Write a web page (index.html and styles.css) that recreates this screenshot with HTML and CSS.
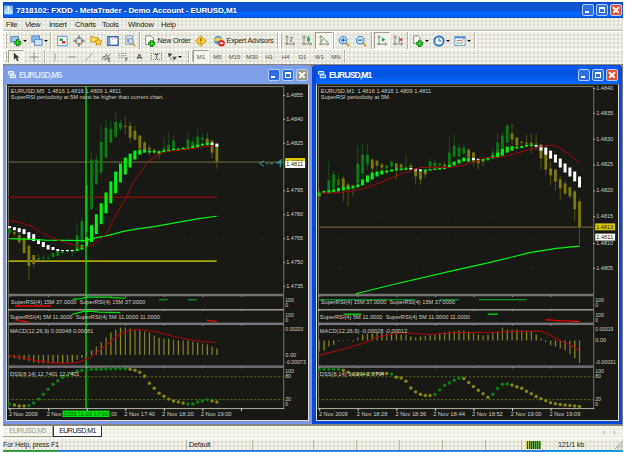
FILE: index.html
```html
<!DOCTYPE html>
<html lang="en">
<head>
<meta charset="utf-8">
<title>MetaTrader</title>
<link rel="stylesheet" href="styles.css">
</head>
<body>
<svg class="defs" aria-hidden="true">
  <defs>
    <g id="chartbars"><path d="M3.500 1v11M1 10.500h11M1.500 3l2-2 2 2M10.500 8.500l2 2-2 2" fill="none" stroke="#77776b"/></g>
    <g id="plus"><path d="M8 5v8M4 9h8" stroke="#0a6b0a" stroke-width="4"/><path d="M8 5.500v7M4.500 9h7" stroke="#2fd62f" stroke-width="2"/></g>
  </defs>
</svg>
<div class="app">
  <header class="titlebar">
    <svg class="logo" viewBox="0 0 11 11"><rect width="11" height="11" rx="1" fill="#77b9ef"/><path d="M5.500 1L1 8h9zM2 9.500h7M5.500 2v6M3.500 5.500h4" fill="none" stroke="#fff"/></svg>
    <h1>7318102: FXDD - MetaTrader - Demo Account - EURUSD,M1</h1>
    <div class="controls"><i class="min"></i><i class="max"></i><i class="close"></i></div>
  </header>
  <nav class="menu"><span>File</span><span class="m2">View</span><span class="m3">Insert</span><span class="m4">Charts</span><span class="m4">Tools</span><span class="m5">Window</span><span>Help</span></nav>

  <div class="toolbar main">
    <i class="grip"></i>
    <span class="drop w21"><svg viewBox="0 0 14 14"><rect x="1" y="2" width="9" height="6" fill="#9fc3e8" stroke="#4a78a8"/><use href="#plus" x="1"/></svg></span>
    <span class="drop w19"><svg viewBox="0 0 14 14"><rect x="1" y="1" width="9" height="7" fill="#8fb9ec" stroke="#4b7dc0"/><rect x="4" y="5" width="9" height="7" fill="#cfe2f7" stroke="#4b7dc0"/></svg></span>
    <i class="sep w5"></i>
    <span class="w17"><svg viewBox="0 0 14 14"><rect x="2" y="1.500" width="11" height="11" fill="#fff" stroke="#4a8bc8"/><path d="M4 4h4v3H4z" fill="#2aa34c"/><path d="M7 7h4v3H7z" fill="#d33a2e"/></svg></span>
    <span class="w17"><svg viewBox="0 0 14 14"><circle cx="7" cy="7" r="4" fill="none" stroke="#555"/><path d="M7 0v5M7 9v5M0 7h5M9 7h5" stroke="#555"/></svg></span>
    <span class="w17"><svg viewBox="0 0 14 14"><path d="M1 2h3l1 1h4v5H1z" fill="#ffe15a" stroke="#ba8b13"/><path d="M10 4l1.300 2.700 2.700.3-2 2 .5 3-2.500-1.500L7 12l.5-3-2-2 3-.3z" fill="#ffd232" stroke="#c28b10"/></svg></span>
    <span class="w17"><svg viewBox="0 0 14 14"><rect x="1" y="2" width="12" height="10" fill="#fff" stroke="#2459a8" stroke-width="1.500"/><path d="M3 2v10" stroke="#5f9be0" stroke-width="2"/><path d="M6 5h1M9 4h2" stroke="#d84a2c"/></svg></span>
    <span class="w17"><svg viewBox="0 0 14 14"><path d="M2 1h8v10H2z" fill="#e8f0f8" stroke="#8195ac"/><path d="M4 3v6M6 3v6" stroke="#8195ac"/><circle cx="8" cy="7" r="3" fill="#c9e1fa" stroke="#6189b5"/><path d="M10 9l3 4" stroke="#d5a12b" stroke-width="2"/></svg></span>
    <i class="sep w4"></i>
    <span class="label w50"><svg viewBox="0 0 14 14"><path d="M2 1h6l3 3v7H2z" fill="#fff" stroke="#777"/><use href="#plus" x="1" y="1"/></svg><b>New Order</b></span>
    <span class="w18"><svg viewBox="0 0 14 14"><path d="M7 .8L13.200 7 7 13.200.8 7z" fill="#ffcf2b" stroke="#b7830d"/><path d="M7 3.500v4M7 9v1.500" stroke="#855000" stroke-width="1.500"/></svg></span>
    <span class="label w66"><svg viewBox="0 0 14 14"><circle cx="6" cy="6" r="5" fill="#5b9bd8"/><path d="M1 5q5-4 10 0v2H1z" fill="#f0c74c"/><circle cx="10" cy="9.500" r="3.800" fill="#db2d22"/><path d="M8 9.500h4" stroke="#fff" stroke-width="1.500"/></svg><b>Expert Advisors</b></span>
    <i class="sep w3"></i><i class="grip g3"></i>
    <span class="w16"><svg viewBox="0 0 14 14"><use href="#chartbars"/><path d="M8.500 2v6M6.500 7h2M8.500 3h2" stroke="#4c8a50" fill="none"/></svg></span>
    <span class="w17"><svg viewBox="0 0 14 14"><use href="#chartbars"/><path d="M8.500 1v8" stroke="#247a36"/><path d="M7 3h3.500v4H7z" fill="#31b557"/></svg></span>
    <span class="w18 on"><svg viewBox="0 0 14 14"><use href="#chartbars"/><path d="M4 8q3-6 4-3t4 3" stroke="#3fa552" fill="none"/></svg></span>
    <i class="sep w2"></i>
    <span class="w17"><svg viewBox="0 0 14 14"><path d="M9 9l4 4" stroke="#d4a735" stroke-width="2.500"/><circle cx="6" cy="6" r="4.300" fill="#cfe8ff" stroke="#3d86d8" stroke-width="1.300"/><path d="M6 3.500v5M3.500 6h5" stroke="#1f5db5" stroke-width="1.400"/></svg></span>
    <span class="w17"><svg viewBox="0 0 14 14"><path d="M9 9l4 4" stroke="#d4a735" stroke-width="2.500"/><circle cx="6" cy="6" r="4.300" fill="#cfe8ff" stroke="#3d86d8" stroke-width="1.300"/><path d="M3.500 6h5" stroke="#1f5db5" stroke-width="1.400"/></svg></span>
    <i class="sep w5"></i>
    <span class="w16 on"><svg viewBox="0 0 14 14"><use href="#chartbars"/><path d="M7 3l4 2.500-4 2.500z" fill="#1f9b3d"/></svg></span>
    <span class="w16"><svg viewBox="0 0 14 14"><use href="#chartbars"/><path d="M8.500 2v7" stroke="#777"/><path d="M12 3L8.500 5.500 12 8z" fill="#cb3b2a"/></svg></span>
    <i class="sep w4"></i>
    <span class="drop w21"><svg viewBox="0 0 14 14"><path d="M2 1h5l2 2v7H2z" fill="#fff" stroke="#777"/><use href="#plus" x="1" y="1"/></svg></span>
    <span class="drop w21"><svg viewBox="0 0 14 14"><circle cx="7" cy="7" r="5.500" fill="#e8f3ff" stroke="#2767c5" stroke-width="2"/><path d="M7 3.500V7h3" stroke="#2459a8" fill="none"/></svg></span>
    <span class="drop w22"><svg viewBox="0 0 14 14"><rect x="1" y="2" width="12" height="10" fill="#fff" stroke="#4d8cd0"/><path d="M1 3h12" stroke="#4d8cd0" stroke-width="2"/><path d="M3 7l3-1 2 1 3-2" stroke="#c43b2b" fill="none"/><path d="M3 10l3-1 2 1 3-2" stroke="#3a9a4a" fill="none"/></svg></span>
    <i class="sep w2"></i>
  </div>

  <div class="toolbar tools">
    <i class="grip"></i>
    <span class="w16 on"><svg viewBox="0 0 14 14"><path d="M4 1v10l2.500-2.500L8.500 13l2-1-2-4H12z" fill="#333"/></svg></span>
    <span class="w19"><svg viewBox="0 0 14 14"><path d="M7 1v12M1 7h12" stroke="#777"/></svg></span>
    <i class="sep w3"></i>
    <span class="w17"><svg viewBox="0 0 14 14"><path d="M7 2v10" stroke="#888"/></svg></span>
    <span class="w17"><svg viewBox="0 0 14 14"><path d="M2 7h10" stroke="#888" stroke-width="1.300"/></svg></span>
    <span class="w17"><svg viewBox="0 0 14 14"><path d="M2 12L12 2" stroke="#888"/></svg></span>
    <span class="w17"><svg viewBox="0 0 14 14"><path d="M1 11L9 2M5 12l8-9M2 7l8-2M4 10l8-2M10 9v4M10 9.500h3M10 11h2.500M10 13h3" stroke="#555" fill="none"/></svg></span>
    <span class="w17"><svg viewBox="0 0 14 14"><path d="M1 2h12M1 5h12M1 8h8" stroke="#777" stroke-dasharray="2 1"/><path d="M11 8v5M11 8.500h3M11 10.500h2" stroke="#555"/></svg></span>
    <span class="w17 letter">A</span>
    <span class="w17 letter boxed">T</span>
    <span class="drop w22"><svg viewBox="0 0 14 14"><path d="M2 2l5 1-4 4zM8 7h5l-2.500 4zM4 8l5 4" fill="#444" stroke="#555"/></svg></span>
    <i class="sep w3"></i><i class="grip g3"></i>
    <span class="w16 on per">M1</span><span class="w17 per">M5</span><span class="w17 per">M15</span><span class="w18 per">M30</span><span class="w16 per">H1</span><span class="w17 per">H4</span><span class="w17 per">D1</span><span class="w17 per">W1</span><span class="w16 per">MN</span>
    <i class="sep w2"></i>
  </div>

  <main class="mdi">
    <section class="window inactive">
      <header><svg viewBox="0 0 9 9"><path d="M.5.500h6v3h-6zM2.500 4.500h6v3h-6z" fill="#a9c5f2" stroke="#fff"/></svg><h2>EURUSD,M5</h2><div class="controls"><i class="min"></i><i class="max"></i><i class="close"></i></div></header>
      <svg class="chart" id="m5" viewBox="8 84 301 337"></svg>
    </section>
    <section class="window active">
      <header><svg viewBox="0 0 9 9"><path d="M.5.500h6v3h-6zM2.500 4.500h6v3h-6z" fill="#2f7bf2" stroke="#fff"/></svg><h2>EURUSD,M1</h2><div class="controls"><i class="min"></i><i class="max"></i><i class="close"></i></div></header>
      <svg class="chart" id="m1" viewBox="317 84 301 337"></svg>
    </section>
  </main>

  <div class="tabs"><span>EURUSD,M5</span><span class="current">EURUSD,M1</span><em>‹</em><em>›</em></div>
  <footer class="status">
    <span class="s1">For Help, press F1</span><span class="s2">Default</span><span class="s3"></span><span class="s4"></span><span class="s4"></span><span class="s4"></span><span class="s4"></span><span class="s5"></span>
    <span class="net"><svg viewBox="0 0 15 8"><path d="M0 4h15" stroke="#65a14c" stroke-width="8"/><path d="M0 4h4" stroke="#d0cf42" stroke-width="8"/><path d="M1.500 0v8M3.500 0v8M5.500 0v8M7.500 0v8M9.500 0v8M11.500 0v8M13.500 0v8" stroke="#264b79"/></svg><b>121/1 kb</b></span>
    <svg class="resize" viewBox="0 0 10 10"><path d="M1 10l9-9M4 10l6-6M7 10l3-3" stroke="#9a9888"/></svg>
  </footer>
  <div class="taskbar"><i></i></div>
</div>
<script src="script.js"></script>
</body>
</html>
```
FILE: styles.css
```css
* { box-sizing: border-box; }
body { margin: 0; background: #fff; font-family: "Liberation Sans", sans-serif; color: #222; overflow: hidden; }
h1, h2, b, i, em { margin: 0; font-style: normal; font-weight: normal; }
.defs { display: block; width: 0; height: 0; }
.app { display: flex; flex-direction: column; width: 620px; height: 450px; margin: 2px 0 0 3px; }
.titlebar, .menu, .toolbar, .tabs, .status, .window header { display: flex; align-items: center; flex: none; white-space: nowrap; }

.titlebar { height: 16px; padding: 0 1px 0 1px; background: linear-gradient(#0b4fc8, #0f55d8 55%, #0465fb 65%, #0560f5 92%, #0842b8); }
.logo { width: 9px; height: 10px; margin-right: 3px; }
.titlebar h1 { font-family: "Liberation Sans", sans-serif; font-size: 8px; font-weight: bold; letter-spacing: -.08px; color: #fff; text-shadow: 0 1px #123a86; }
.controls { display: flex; gap: 2px; margin-left: auto; }
.controls i { position: relative; width: 12px; height: 12px; border: 1px solid #b6cdfa; border-radius: 2px; background: #2f6fe4; }
.controls .min::after { content: ""; position: absolute; left: 2px; bottom: 2px; width: 4px; height: 2px; background: #fff; }
.controls .max::after { content: ""; position: absolute; inset: 2px; border: 1px solid #fff; border-top-width: 2px; }
.controls .close { background: #e1512d; }
.controls .close::before, .controls .close::after { content: ""; position: absolute; left: 1px; top: 4px; width: 8px; height: 1.500px; background: #fff; transform: rotate(45deg); }
.controls .close::after { transform: rotate(-45deg); }

.menu, .toolbar, .tabs, .status {
  background-color: #e4e3d9;
  background-image: radial-gradient(circle at 1px 1px, #fbfbf2 .7px, transparent .8px), radial-gradient(circle at 3px 3px, #f4f2ae .6px, transparent .7px);
  background-size: 4px 4px, 8px 6px;
}
.menu { height: 13px; padding-left: 3px; border-bottom: 1px solid #bfbcae; font-size: 7.600px; letter-spacing: -.25px; }
.menu span { width: 19px; }
.menu .m2 { width: 24px; }
.menu .m3 { width: 26px; }
.menu .m4 { width: 27px; }
.menu .m4 + .m4 { width: 26px; }
.menu .m5 { width: 33px; }

.toolbar { border-top: 1px solid #fff; }
.main { height: 18px; }
.tools { height: 15px; padding-bottom: 1px; }
.toolbar > * { flex: none; display: flex; align-items: center; justify-content: center; height: 100%; }
.toolbar svg { width: 12px; height: 12px; flex: none; }
.tools svg { width: 10px; height: 10px; }
.toolbar .sep { background: linear-gradient(90deg, #b5b3a4 1px, #fff 1px, #fff 2px, transparent 2px) center / 2px 100% no-repeat; }
.toolbar .grip { width: 5px; background: linear-gradient(90deg, #fff 1px, #b5b3a4 1px) center / 2px 80% no-repeat; }
.toolbar .g3 { width: 3px; }
.toolbar .on { background: #f3f3eb; border: 1px solid; border-color: #a19f90 #fff #fff #a19f90; }
.toolbar .drop { justify-content: flex-start; gap: 1px; padding-left: 2px; }
.drop::after { content: ""; border: 2px solid transparent; border-top: 2px solid #111; border-bottom: 0; }
.label { gap: 2px; font-size: 7.200px; letter-spacing: -.2px; }
.label b { white-space: nowrap; }
.letter { font-size: 8px; font-weight: bold; color: #555; }
.toolbar .boxed { font-size: 6.500px; }
.boxed { outline: 1px dotted #777; outline-offset: -4px; }
.per { font-size: 6px; color: #555; }
.w2 { width: 2px; } .w3 { width: 3px; } .w4 { width: 4px; } .w5 { width: 5px; }
.w16 { width: 16px; } .w17 { width: 17px; } .w18 { width: 18px; } .w19 { width: 19px; }
.w21 { width: 21px; } .w22 { width: 22px; } .w50 { width: 50px; } .w66 { width: 66px; }

.mdi { display: flex; flex: none; height: 361px; background: #808080; border-top: 1px solid #8b8876; }
.window { display: flex; flex-direction: column; height: 359px; padding: 1px 3px 3px 4px; border-radius: 4px 4px 0 0; }
.inactive { width: 309px; padding-left: 3px; background: #7d97e4; }
.active { width: 310px; background: #0b49d6; }
.window header { height: 18px; padding: 0 1px 0 2px; }
.inactive header { background: repeating-linear-gradient(135deg, #7aa0ea 0 2px, #849ee5 2px 3px); }
.active header { background: linear-gradient(#0a5af0, #0653df 45%, #0669ff 90%); }
.window header svg { width: 8px; height: 8px; margin-right: 3px; }
.window h2 { font-family: "Liberation Sans", sans-serif; font-size: 8.500px; font-weight: bold; letter-spacing: -.85px; color: #fff; }
.inactive h2 { color: #dbe6fb; }
.inactive .close { background: #9b9785; }
.chart { display: block; flex: none; width: 303px; height: 337px; border: 1px solid #dcdcd0; border-top-color: #44443e; background: #181814; }
.chart text { font-family: "Liberation Sans", sans-serif; font-size: 6px; fill: #cfcfc4; }

.tabs { height: 13px; background-color: #f0efe4; border-top: 1px solid #8b8876; font-size: 7px; }
.tabs span { width: 50px; height: 11px; align-self: flex-start; text-align: center; line-height: 10px; color: #a09d8e; border-right: 1px solid #aaa797; border-bottom: 1px solid #aaa797; letter-spacing: -.5px; }
.tabs .current { width: 49px; color: #111; background: #fff; border: 1px solid #333; border-top: 0; }
.tabs em { width: 10px; color: #888; }
.tabs .current + em { margin-left: auto; }

.status { height: 12px; border-top: 1px solid #fff; font-size: 7.200px; letter-spacing: -.2px; }
.status > span { height: 10px; line-height: 10px; border-right: 1px solid #bbb8a7; padding-left: 2px; }
.status .s1 { width: 184px; padding-left: 0; }
.s2 { width: 66px; } .s3 { width: 61px; } .s4 { width: 43px; } .s5 { width: 36px; }
.status .net { display: flex; align-items: center; flex: 1; gap: 17px; border: 0; padding-left: 4px; }
.net svg { width: 15px; height: 8px; }
.resize { width: 9px; height: 9px; }
.taskbar { flex: none; height: 2px; background: linear-gradient(90deg, #2f7fe8 0 542px, #1599df 542px); }
.taskbar i { display: block; width: 55px; height: 2px; background: #3b9b3b; }
```
FILE: script.js
```js
const STEP = 4.85;
const OLIVE = '#7c7a0a', GREEN = '#0b7c14', LIME = '#00f410', WHITE = '#fff', GREY = '#77776f';

function draw(id, d) {
  const X0 = d.x0, L = d.left, R = L + 277, out = [];
  const px = i => X0 + i * STEP;
  const line = (x1, y1, x2, y2, c, w = 1, extra = '') =>
    out.push(`<line x1="${x1}" y1="${y1}" x2="${x2}" y2="${y2}" stroke="${c}" stroke-width="${w}" ${extra}/>`);
  const rect = (x, y, w, h, c) => out.push(`<rect x="${x}" y="${y}" width="${w}" height="${h}" fill="${c}"/>`);
  const poly = (p, c, w = 1) => out.push(`<polyline points="${p}" fill="none" stroke="${c}" stroke-width="${w}"/>`);
  const text = (x, y, s, len, c = '') =>
    out.push(`<text x="${x}" y="${y}" ${len ? `textLength="${len}" lengthAdjust="spacingAndGlyphs"` : ''} ${c ? `style="fill:${c}"` : ''}>${s}</text>`);

  rect(L, 85, 1, 325, GREY); rect(L, 85, 277, 1, GREY); rect(R, 85, 1, 325, GREY);
  rect(L, 294, 277, 2.5, '#73736f'); rect(L, 309.5, 277, 1.3, '#b0b0a8');
  rect(L, 323, 277, 2.5, '#77777a'); rect(L, 366, 277, 2.7, '#706a70'); rect(L, 409, 278, 1, '#b0b0a4');
  line(L, 377.5, R, 377.5, '#587019', 1, 'stroke-dasharray="2 2"');
  line(L, 400.5, R, 400.5, '#587019', 1, 'stroke-dasharray="2 2"');
  d.levels.forEach(l => line(L, l[0], l[1], l[0], l[2], l[3]));

  d.candles.forEach(([i, hi, lo, top, bot, c]) => {
    const col = c ? GREEN : OLIVE;
    line(px(i), hi, px(i), lo, col, .9, 'stroke-opacity=".65"');
    rect(px(i) - 1.4, top, 2.8, bot - top, col);
  });
  d.trend.forEach(([top, bot, white], i) => rect(px(i) - 1.5, top, 3, bot - top, white ? WHITE : LIME));
  poly(d.slow, LIME, 1.2);
  poly(d.fast, '#a00808', 1);
  if (d.cursor) line(d.cursor, 85, d.cursor, 409, '#00f410', 1.2);

  d.rsi.forEach(r => poly(r[0], r[1], 1.3));
  d.macd.forEach((y, i) => rect(px(i) - .6, Math.min(y, d.zero), 1.3, Math.abs(y - d.zero), i % 2 ? '#8b881b' : '#77743a'));
  poly(d.signal, '#a30a0a', 1.1);
  d.dss.forEach((y, i) => out.push(`<circle cx="${px(i)}" cy="${y}" r="1.75" fill="${d.dssGreen(i) ? '#0b7c14' : '#858312'}"/>`));

  text(L + 3, 92, `EURUSD,${d.period}&#160; 1.4816 1.4816 1.4809 1.4811`, 111);
  text(L + 3, 98.5, d.note, d.noteLen);
  text(L + 3, 304.5, 'SuperRSI(4) 15M 37.0000&#160; SuperRSI(4) 15M 37.0000', 135);
  text(L + 2, 319, 'SuperRSI(4) 5M 11.0000&#160; SuperRSI(4) 5M 11.0000 11.0000', 151);
  text(L + 2, 333.5, d.macdText, d.macdLen);
  text(L + 2, 376.5, d.dssText, d.dssLen);
  d.axis.forEach(([y, s]) => { text(R + 3, y + 2, s, 17); rect(R, y, 2, 1, '#aaa'); });
  d.tags.forEach(([y, bg, s]) => { rect(R + 2, y - 3.5, 20, 7, bg); text(R + 3, y + 2, s, 17, '#222'); });
  [[300, '100'], [305, '0'], [315, '100'], [320, '0'], [372, '100'], [377, '80'], [400, '20'], [405, '0']]
    .forEach(([y, s]) => text(R + 2, y + 2.2, s, s.length * 2.9));
  d.macdAxis.forEach(([y, s]) => text(R + 2, y + 2, s, s.length < 5 ? 11 : s.length * 2.6));
  d.times.forEach(([x, s, len, hot]) => {
    if (hot) rect(x, 411.5, 47, 6.5, '#00e010');
    text(x + (hot ? 1 : 0), 417, s, len, hot ? '#075a08' : '');
  });
  for (let k = 0; k < 7; k++) {
    rect(X0 + k * 38.8, 409, 1, 3, '#ccc');
    [296, 310, 325, 368].forEach(y => rect(X0 + k * 38.8, y, 1, 1, '#aaa'));
    d.grid.forEach(y => rect(X0 + 20 + k * 38.8, y, 1, 1, '#3c3c36'));
  }
  if (d.marker) out.push(`<path d="${d.marker}" fill="none" stroke="#2aa7a0"/>`);
  document.getElementById(id).innerHTML = out.join('');
}

draw('m5', {
  period: 'M5', x0: 9.7, left: 8, cursor: 86.6, zero: 355.5,
  note: 'SuperRSI periodicity at 5M must be higher than current chart.', noteLen: 154,
  levels: [[161.5, 285, '#77703f', 1], [197, 218, '#7f0b0b', 1.6], [261.2, 218, '#aaa70c', 1.6]],
  trend: [[226,228,1],[227,230,1],[228,232,1],[229,234,1],[232,239,1],[234,241,1],[239,244,1],[242,247,1],[245,249.5,1],[247,250,1],[249,251,1],[250,251,1],[250,251,1],[250,251,1],[249,251],[245,249.5],[237,247],[225,242],[214,234],[203,224],[192,213],[181,203],[171,193],[163,182],[157,174],[153,167],[150,159],[149,154],[149,152],[150,152],[150.5,152],[150.5,152.5],[149.5,151.5],[149,151],[148,150],[148,149.5],[147,149],[147,148.5],[145,148],[144,147],[143,145],[142,144.5],[142,144.5,1],[143,146,1]],
  candles: [[0,228,235,229,233,1],[1,230,237,232,234],[2,232,244,235,242],[3,237,254,238,253],[4,244,280,246,266],[5,255,268,255,264],[6,254,260,258,260,1],[7,255,259,257.5,258.5,1],[8,254,261,258,259,1],[9,252,258,253,257,1],[10,250,256,251,256,1],[11,250,255,251,253,1],[12,250,254,251,252,1],[13,250,256,251,252,1],[14,222,250,235,250,1],[15,217,250,221,242,1],[16,180,232,185,232,1],[17,150,209,159,209,1],[18,153,184,159,184,1],[19,124,175,141,172,1],[20,119,158,127,157,1],[21,119,142,128,142,1],[22,112,137,121,136,1],[23,119,130,122,128,1],[24,116,134,125,126],[25,121,142,125,137],[26,125,140,130,139],[27,134,150,135,148],[28,140,152,142,151],[29,144,155,147,149],[30,148,154,149,151],[31,149,158,151,154],[32,137,150,147,149,1],[33,132,150,144,149,1],[34,135,150,140,148,1],[35,147,151,148,149,1],[37,132,148,139,147,1],[38,136,147,141,146,1],[39,129,145,136,145,1],[40,132,143,137,139,1],[41,132,145,138,143],[42,139,158,140,152],[43,144,168,144,161]],
  fast: '9,220.5 20,222 33,227 45,234 58,240 70,244 83,247 92,246 100,240 107,234 113,222 120,209 128,195 135,180 143,170 150,160 160,153.5 168,151 185,149 200,147 215,144.5',
  slow: '9,238.5 25,239 45,240 85,240.5 95,238 110,235 125,231 140,228.5 155,226.5 180,222 200,218.5 218,216',
  rsi: [['73,299.5 82,299 87,297.3 112,297.3 112,298 126,298.3', '#00d810'], ['160,300 169,300', '#08902a'], ['189,300 198,300', '#08902a'], ['15,306.3 52,306.3', '#e00'], ['15,320 20,321 29,322.5', '#e00'], ['72,315 83,312 90,311.5 100,312.5 121,313', '#00e010'], ['208,320.5 213,321.5 218,321.5', '#f01010']],
  macd: [358,359,360,360.5,362,363,364,364,364,364,364,364,363.5,362.5,360.5,358.5,352.5,351,347,343,338,333,330,328,328,329,329.5,331,332,333,336,338,339,339,340,341,341,341,342,343,344,345,347,349],
  signal: '9,356 20,358 35,361 50,363 65,364 78,363 90,359 100,351 110,343 120,335 130,331 140,330 150,331 160,333 175,337 190,340 205,342 217,343',
  dss: [405,406,407,407,406.5,404,400,395,390,385,381.5,378,376,374,372,371,371,370,370,370,369.7,369.5,369.5,369.5,369.5,370,371,373,377,384,389,394,397,400,402,403,404,405,405,403,402,400.5,402,403],
  dssGreen: i => (i > 3 && i < 25) || (i > 36 && i < 42) || i === 0,
  macdText: 'MACD(12,26,9) 0.00048 0.00081', macdLen: 84, dssText: 'DSS(8,14) 12.7401 12.7401', dssLen: 70,
  axis: [[94,'1.4855'],[118,'1.4840'],[142,'1.4825'],[190,'1.4795'],[214,'1.4780'],[238,'1.4765'],[262,'1.4750'],[286,'1.4735']],
  tags: [[161,'#dfd000','1.4813'],[164,'#fff','1.4811']],
  macdAxis: [[329,'0.00203'],[355.5,'0.00'],[363,'-0.00073']],
  times: [[9,'2 Nov 2009',29],[47,'2 Nov',15],[110.5,':00',7],[63,'2009.11.02 17:00',45,1],[125,'2 Nov 17:40',31],[163,'2 Nov 18:20',32],[202,'2 Nov 19:00',31]],
  grid: [238],
  marker: 'M265.500 160.500l-4.500 2.500 4.500 2.500M268 163h2M272 163h3M284 159l-6 3.500h6M282 159v8'
});

draw('m1', {
  period: 'M1', x0: 318.3, left: 317, zero: 341,
  note: 'SuperRSI periodicity at 5M.', noteLen: 70,
  levels: [[227, 594, '#68522a', 1.3]],
  trend: [[192,195],[190.5,192.5],[190,193],[189,191.5],[187.5,191],[186.5,190],[186,189],[186,188],[184,187],[179,185],[175,182],[172,179],[171,176],[170,174],[170,172],[169,171],[168,170],[168,169.7],[167.7,169.4],[167.5,169,1],[168.3,170,1],[169,170.5,1],[169,171],[168.5,170],[168,169.5],[167.5,169],[167,168.5],[164,167],[161,165],[159,163],[157,161],[157.5,161],[157.5,159.5,1],[158.5,159.7,1],[158.5,160],[157,159],[155,158],[152,157],[148,155],[146,152],[145.5,150],[146,148],[145.5,147.5],[144,146],[144,145.5],[144.5,146,1],[145,150,1],[147,154,1],[150,158,1],[154,162,1],[158,167,1],[163,172,1],[167,176,1],[171,181,1],[176,187,1]],
  candles: [[0,189,200,193,196],[2,161,192,180,192,1],[3,170,190,174,188,1],[4,173,190,179,185,1],[5,176,201,178,188],[6,182,206,184,187],[7,184,196,185,187],[8,144,184,163,183,1],[9,143,178,154,173,1],[10,143,170,154,164,1],[11,158,172,159,168],[12,160,170,160,165],[13,162,173,164,167],[14,164,174,165,168,1],[15,160,168,161,166,1],[16,162,179,163,168],[17,162,170,164,167],[18,154,168,166,168,1],[19,163,170,165,167],[20,168,184,169,176],[21,169,184,170,179],[22,169,178,170,174],[23,158,168,161,166,1],[24,159,167,162,166,1],[25,162,168,163,165,1],[26,161,168,164,166],[27,136,166,152,164,1],[28,134,158,145,156,1],[29,143,158,147,156,1],[30,143,155,147,153,1],[31,148,162,149,157],[32,151,166,152,162],[33,157,169,158,163],[34,158,166,159,161],[35,157,161,158,160,1],[36,148,158,152,157,1],[37,133,157,142,156,1],[38,131,152,135,147,1],[39,123,145,125,142,1],[40,123,144,133,139],[41,136,146,137,145],[42,140,147,141,142],[43,134,144,142,143],[44,133,153,142,144],[45,133,149,143,144],[46,143,169,144,158],[47,145,175,150,169],[48,161,185,168,175],[49,168,190,169,181],[50,176,200,179,188],[51,181,195,183,193],[52,186,198,187,196],[53,190,203,191,197],[53,192,221,194,209],[54,198,246,201,227]],
  fast: '318,193 340,192 360,189 375,184 390,178 402,173 420,167 450,167 462,165 478,160 485,157 500,157 515,153 530,149 545,145 553,144.5 560,147 570,154 580,162',
  slow: '355,294 397,283.7 453,270.7 488,263 530,252.7 557,248.3 580,246',
  rsi: [['318,300 415,300','#08902a'],['440,300 459,300','#08902a'],['479,300 527,300','#08902a'],['343,314.5 361,314.5','#00e010'],['488,314.5 498,314.5','#00e010'],['546,320 558,321 580,321.8','#e00']],
  macd: [352,351,347,345.5,342,341.5,341.5,342,338,335,334,334,333,333,333,333,334,335,335,337,338,337,336.5,336,335,333.5,332.5,332,331.5,331,331,332,334,335,336,335,333,332,328,330,330,330,330.5,331,331,335,339,342.5,346,347,349,351,355,359,364],
  signal: '318,356 345,349 365,343 375,338 400,333 430,335 455,333 485,333 510,332 540,331.5 548,334 560,341 570,345 580,351',
  dss: [370,370,370,370,370,371,373,375,375,375,374.7,374.3,374.3,374.3,374.3,374.7,378,378.7,382,388.7,392.7,395,396.3,396.3,395.3,390.7,386,383.7,381,378.7,379.3,383.3,387.3,391,394.7,398,395,389.3,385,384.7,385.7,387.5,389,392,394.7,397.3,399.7,401.7,403.7,404.7,405.3,406,406.3,407,407.3],
  dssGreen: i => i < 5 || i === 9 || i === 11 || i === 15 || (i > 23 && i < 30) || (i > 35 && i < 40),
  macdText: 'MACD(12,26,9) -0.00028 -0.00012', macdLen: 88, dssText: 'DSS(8,14) 3.0294 2.8794', dssLen: 65,
  axis: [[87,'1.4840'],[112,'1.4835'],[138,'1.4830'],[164,'1.4825'],[190,'1.4820'],[216,'1.4815'],[243,'1.4810'],[268,'1.4805']],
  tags: [[226.7,'#d5cb00','1.4813'],[237,'#fff','1.4811']],
  macdAxis: [[329,'0.00019'],[341,'0.00'],[363,'-0.00031']],
  times: [[318,'2 Nov 2009',29],[356,'2 Nov 18:28',31],[395,'2 Nov 18:36',31],[433,'2 Nov 18:44',32],[472,'2 Nov 18:52',31],[511,'2 Nov 19:00',31],[550,'2 Nov 19:09',31]],
  grid: [216, 237, 268]
});
```
